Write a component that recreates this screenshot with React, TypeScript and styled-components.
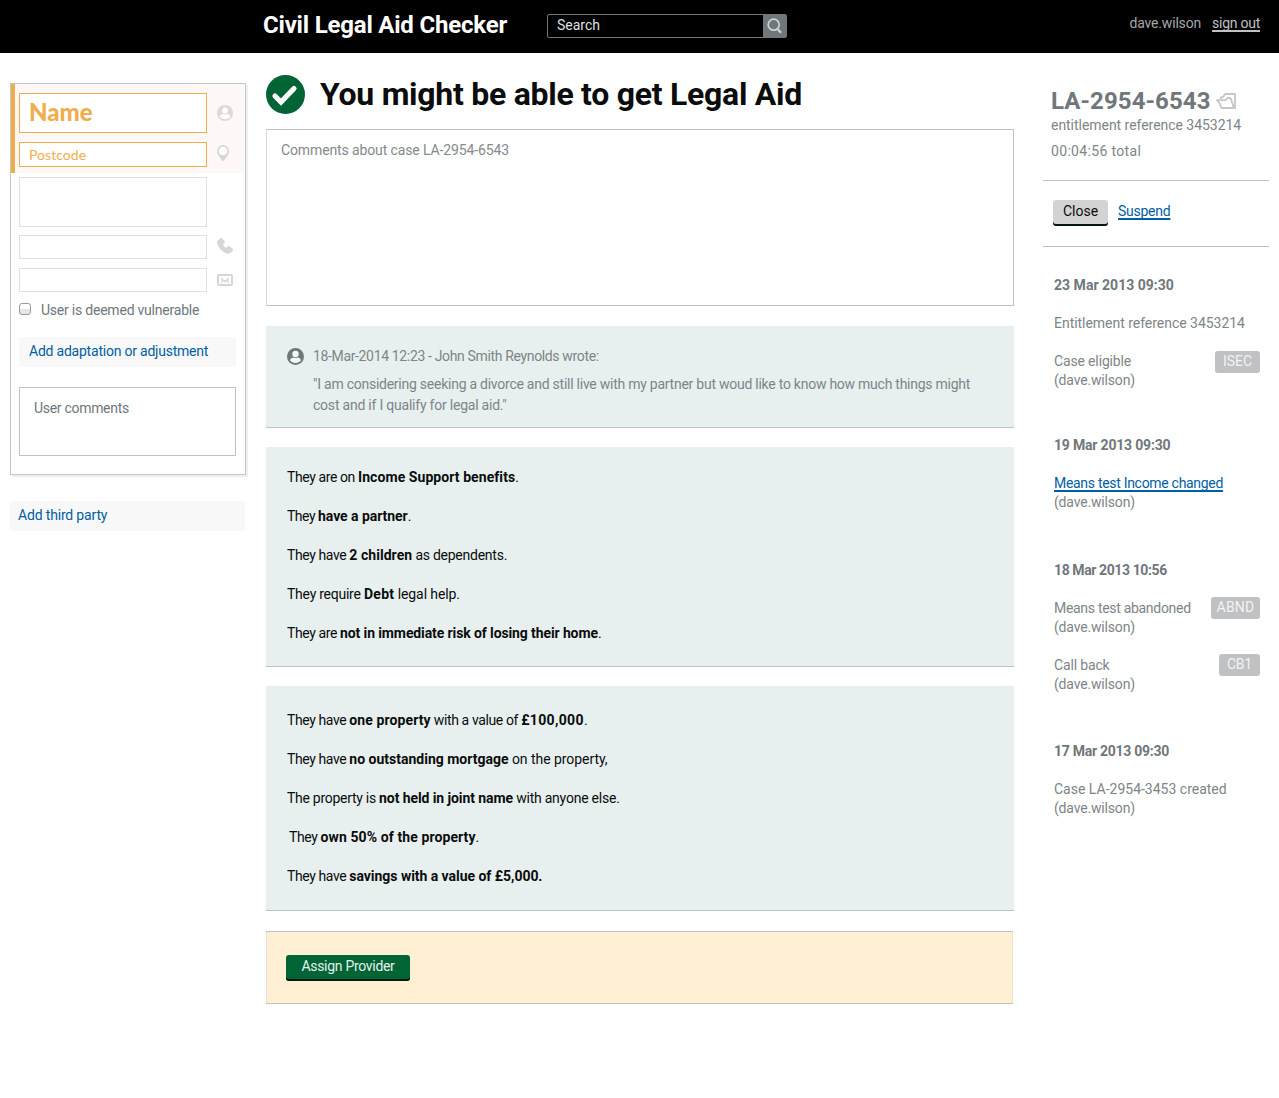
import React from "react";
import styled, { createGlobalStyle } from "styled-components";

const Global = createGlobalStyle`
  *, *::before, *::after { box-sizing: border-box; }
  body {
    margin: 0;
    background: #fff;
    color: #0b0c0c;
    font: 14px/19px Roboto, "Liberation Sans", sans-serif;
  }
  h1, h2, h3, p { margin: 0; font-size: inherit; font-weight: 400; }
  svg { display: block; flex: none; }
`;

const T = styled.span<{ $ls?: number }>`
  letter-spacing: ${(p) => p.$ls ?? 0}px;
  white-space: pre;
`;
const B = styled(T)`
  font-weight: 700;
`;

const Page = styled.div`
  min-height: 1098px;
`;
const Header = styled.header`
  height: 53px;
  background: #000;
  display: flex;
  align-items: flex-start;
  padding: 0 19px 0 263px;
`;
const Brand = styled.h1`
  width: 284px;
  padding-top: 11px;
  color: #fff;
  font-size: 24px;
  line-height: 28px;
`;
const Search = styled.div`
  display: flex;
  width: 240px;
  height: 24px;
  margin-top: 14px;
  border: 1px solid #6f777b;
  border-radius: 2px;
  color: #dee0e2;
  line-height: 21px;
  padding-left: 9px;
  justify-content: space-between;
`;
const SearchButton = styled.span`
  width: 23px;
  background: #6f777b;
  display: grid;
  place-items: center;
`;
const Account = styled.div`
  display: flex;
  gap: 11px;
  margin: 14px 0 0 auto;
  color: #a4a8aa;
`;
const Link = styled.a<{ $c?: string }>`
  color: ${(p) => p.$c ?? "#005ea5"};
  text-decoration: underline;
  text-decoration-thickness: 1.5px;
  text-underline-offset: 2px;
  text-decoration-skip-ink: none;
  white-space: nowrap;
`;
const Columns = styled.div`
  display: grid;
  grid-template-columns: 257px 777px 226px;
  padding-left: 9px;
  align-items: start;
`;
const Left = styled.aside`
  padding-top: 30px;
`;
const Card = styled.section`
  width: 236px;
  height: 392px;
  margin-left: 1px;
  border: 1px solid #bfc9c8;
  box-shadow: 2px 2px 0 #efefef;
`;
const Required = styled.div`
  height: 89px;
  width: 233px;
  padding: 9px 0 0 4px;
  background: #fdf7f5;
  border-left: 4px solid #f0ad4e;
`;
const Optional = styled.div`
  padding: 4px 0 0 8px;
`;
const FieldRow = styled.div<{ $gap: number; $lift?: number }>`
  display: flex;
  align-items: center;
  gap: 10px;
  margin-bottom: ${(p) => p.$gap}px;
  svg { margin-bottom: ${(p) => p.$lift ?? 0}px; }
`;
const Field = styled.div<{ $h: number; $active?: boolean; $size?: number }>`
  width: 188px;
  height: ${(p) => p.$h}px;
  padding-left: 9px;
  background: #fff;
  border: 1px solid ${(p) => (p.$active ? "#f0ad4e" : "#dfe1e1")};
  color: #f0ad4e;
  font-family: Lato, sans-serif;
  font-size: ${(p) => p.$size ?? 14}px;
  font-weight: ${(p) => ((p.$size ?? 14) > 20 ? 900 : 400)};
  line-height: ${(p) => ((p.$size ?? 14) > 20 ? p.$h - 5 : p.$h - 1)}px;
`;
const CheckRow = styled.div`
  display: flex;
  gap: 10px;
  height: 45px;
  color: #6f777b;
  padding-top: 9px;
`;
const Check = styled.span`
  width: 12px;
  height: 12px;
  margin-top: 2px;
  border: 1px solid #9a9a9a;
  border-radius: 3px;
  background: linear-gradient(#fff 45%, #e6e6e6 50%);
`;
const Action = styled.div<{ $w: number; $x: number }>`
  width: ${(p) => p.$w}px;
  height: 30px;
  padding-left: ${(p) => p.$x}px;
  border-radius: 3px;
  background: #f8f8f8;
  color: #005ea5;
  line-height: 29px;
`;
const UserComments = styled.div`
  width: 217px;
  height: 69px;
  margin-top: 20px;
  border: 1px solid #bfc1c3;
  padding: 11px 14px;
  color: #6f777b;
`;
const ThirdParty = styled.div`
  padding-top: 26px;
`;
const Main = styled.main`
  width: 748px;
  padding-top: 22px;
`;
const Outcome = styled.div`
  display: flex;
  gap: 15px;
  height: 39px;
  margin-bottom: 15px;
  font-size: 32px;
  line-height: 38px;
`;
const CaseNotes = styled.div`
  height: 177px;
  border: 1px solid #bfc1c3;
  border-left: 1px solid #d7d9da;
  padding: 11px 14px;
  color: #838a8d;
`;
const Panel = styled.section<{ $h: number; $top: number; $gap: number }>`
  display: flex;
  flex-direction: column;
  gap: 19px;
  height: ${(p) => p.$h}px;
  margin-top: ${(p) => p.$gap}px;
  padding: ${(p) => p.$top}px 21px 0;
  background: #e7f0ef;
  border-bottom: 1px solid #b9c6c6;
  line-height: 20px;
`;
const Statement = styled.p<{ $indent?: number }>`
  padding-left: ${(p) => p.$indent ?? 0}px;
`;
const Quote = styled.div`
  display: grid;
  grid-template-columns: 18px 1fr;
  column-gap: 8px;
  align-items: center;
  color: #7d8588;
`;
const QuoteText = styled.p`
  grid-column: 2;
  margin-top: 8px;
  line-height: 21px;
`;
const Assign = styled.section`
  width: 747px;
  height: 73px;
  margin-top: 20px;
  padding: 23px 20px;
  background: #fff0d4;
  border: solid #bfc1c3;
  border-width: 1px 0;
  box-shadow: inset 1px 0 #e6dfd1, inset -1px 0 #eee2ca;
`;
const Button = styled.button<{ $w: number; $green?: boolean }>`
  display: block;
  width: ${(p) => p.$w}px;
  height: 26px;
  padding: 0 0 4px;
  border: 0;
  border-radius: 3px;
  font: inherit;
  line-height: 22px;
  color: ${(p) => (p.$green ? "#e5f0eb" : "#0b0c0c")};
  background: ${(p) => (p.$green ? "#006435" : "#d3d3d3")};
  box-shadow: inset 0 -2px #00190d;
`;
const Right = styled.aside`
  padding-top: 34px;
  color: #7d8588;
`;
const Reference = styled.div`
  height: 93px;
  padding-left: 8px;
`;
const CaseTitle = styled.div`
  display: flex;
  align-items: center;
  gap: 5px;
  height: 28px;
  font-size: 24px;
  line-height: 28px;
  color: #6f777b;
  svg { margin-bottom: 1px; }
`;
const Line = styled.p<{ $top?: number }>`
  padding-top: ${(p) => p.$top ?? 0}px;
`;
const Controls = styled.div`
  display: flex;
  gap: 10px;
  height: 67px;
  border: solid #bfc1c3;
  border-width: 1px 0;
  padding: 19px 0 0 10px;
  line-height: 23px;
`;
const Group = styled.section<{ $top: number }>`
  display: flex;
  flex-direction: column;
  gap: 19px;
  padding: ${(p) => p.$top}px 9px 0 11px;
`;
const Entry = styled.div`
  display: flex;
  justify-content: space-between;
`;
const Lines = styled.div`
  display: flex;
  flex-direction: column;
`;
const When = styled.h3`
  color: #6f777b;
`;
const Badge = styled.span<{ $w: number; $top?: number }>`
  width: ${(p) => p.$w}px;
  height: 22px;
  margin: ${(p) => p.$top ?? -2}px 0 -3px;
  border-radius: 3px;
  background: #bfc1c3;
  color: #f2f2f3;
  text-align: center;
  line-height: 21px;
`;

const Person = ({ size = 16, color = "#dadada", face = "#fff" }) => (
  <svg width={size} height={size} viewBox="0 0 16 16">
    <circle cx="8" cy="8" r="8" fill={color} />
    <circle cx="8" cy="5.600" r="3" fill={face} />
    <path d="M2.900 11.800c0-2 2-2.900 3.400-2.900 1 .7 2.400.7 3.400 0 1.400 0 3.400.9 3.400 2.900-1.200 1.400-3.100 2.400-5.100 2.400s-3.900-1-5.100-2.400z" fill={face} />
  </svg>
);
const Pin = () => (
  <svg width="12" height="16" viewBox="0 0 12 16">
    <path d="M6 0a6 6 0 0 1 6 6c0 3.800-3.500 7-5 9.300q-1 1.200-2 0C3.500 13 0 9.800 0 6a6 6 0 0 1 6-6z" fill="#d6d6d6" />
    <circle cx="6" cy="6" r="4.300" fill="#fff" />
  </svg>
);
const Phone = () => (
  <svg width="16" height="16" viewBox="0 0 16 16" fill="#d6d6d6">
    <path d="M.4 3 2.800.7q1.300-1.200 2.600.1L7.500 3q1 1.100 0 2.200L6 6.800c.6 1.300 1.700 2.400 3 3.200l1.300-1.300q1.200-1.100 2.500-.1l2.600 2q1.200 1.100.1 2.300l-1.900 1.900c-1.500 1.500-4.700 1.200-7.600-1.200C3.300 11.500.9 8.300.2 5.400Q-.200 3.800.4 3z" />
  </svg>
);
const Mail = () => (
  <svg width="16" height="12" viewBox="0 0 16 12" fill="none" stroke="#d6d6d6">
    <rect x="1" y="1" width="14" height="10" rx="1" strokeWidth="2" />
    <path d="M4 4l4 3.500L12 4M4 8.500l2-2M12 8.500l-2-2" strokeWidth="1.400" />
  </svg>
);
const Folder = () => (
  <svg width="20" height="16" viewBox="0 0 20 16" fill="none" stroke="#c4c6c8" strokeWidth="1.800" strokeLinejoin="round">
    <path d="M5 6V4.200l2-.2L9.200 1H19v14H5.500" />
    <path d="M5.500 15C4.500 11.500 3 9 1 7.200h8.500l2-2.200h2.800c1.700 2.500 1.700 6 3.700 9.500" />
  </svg>
);
const Magnifier = () => (
  <svg width="15" height="16" viewBox="0 0 15 16" fill="none" stroke="#d0d3d5" strokeWidth="1.700">
    <circle cx="6.700" cy="6.700" r="5.500" />
    <path d="M10.500 11l3.500 3.800" strokeWidth="2.200" />
  </svg>
);
const Tick = () => (
  <svg width="39" height="39" viewBox="0 0 39 39">
    <circle cx="19.500" cy="19.500" r="19.500" fill="#006435" />
    <path d="M9 21l6 6L28 13.500" fill="none" stroke="#fff" strokeWidth="5.200" strokeLinecap="round" />
  </svg>
);

export default function App() {
  return (
    <Page>
      <Global />
      <Header>
        <Brand><B $ls={-0.2}>Civil Legal Aid Checker</B></Brand>
        <Search>
          <T>Search</T>
          <SearchButton><Magnifier /></SearchButton>
        </Search>
        <Account>
          <T $ls={-0.18}>dave.wilson</T>
          <Link $c="#bfc1c3"><T $ls={-0.25}>sign out</T></Link>
        </Account>
      </Header>
      <Columns>
        <Left>
          <Card>
            <Required>
              <FieldRow $gap={9}>
                <Field $h={40} $active $size={24}><T>Name</T></Field>
                <Person />
              </FieldRow>
              <FieldRow $gap={0} $lift={4}>
                <Field $h={25} $active><T $ls={0.05}>Postcode</T></Field>
                <Pin />
              </FieldRow>
            </Required>
            <Optional>
              <FieldRow $gap={8}><Field $h={50} /></FieldRow>
              <FieldRow $gap={9} $lift={2}><Field $h={24} /><Phone /></FieldRow>
              <FieldRow $gap={0}><Field $h={24} /><Mail /></FieldRow>
              <CheckRow>
                <Check />
                <T $ls={-0.22}>User is deemed vulnerable</T>
              </CheckRow>
              <Action $w={217} $x={10}><T $ls={-0.22}>Add adaptation or adjustment</T></Action>
              <UserComments><T $ls={-0.3}>User comments</T></UserComments>
            </Optional>
          </Card>
          <ThirdParty>
            <Action $w={236} $x={9}><T $ls={-0.17}>Add third party</T></Action>
          </ThirdParty>
        </Left>
        <Main>
          <Outcome>
            <Tick />
            <B $ls={-0.27}>You might be able to get Legal Aid</B>
          </Outcome>
          <CaseNotes><T $ls={-0.12}>Comments about case LA-2954-6543</T></CaseNotes>
          <Panel $h={102} $top={20} $gap={20}>
            <Quote>
              <Person size={17} color="#6f777b" face="#f4f8f7" />
              <T $ls={-0.35}>18-Mar-2014 12:23 - John Smith Reynolds wrote:</T>
              <QuoteText>
                <T $ls={-0.25}>"I am considering seeking a divorce and still live with my partner but woud like to know how much things might</T>
                <br />
                <T $ls={-0.22}>cost and if I qualify for legal aid."</T>
              </QuoteText>
            </Quote>
          </Panel>
          <Panel $h={220} $top={20} $gap={19}>
            <Statement><T $ls={-0.4}>They are on </T><B $ls={0.07}>Income Support benefits</B>.</Statement>
            <Statement><T $ls={-0.5}>They </T><B $ls={-0.05}>have a partner</B>.</Statement>
            <Statement><T $ls={-0.4}>They have </T><B $ls={0.05}>2 children</B><T $ls={-0.25}> as dependents.</T></Statement>
            <Statement><T $ls={-0.25}>They require </T><B $ls={0.3}>Debt</B><T $ls={-0.1}> legal help.</T></Statement>
            <Statement><T $ls={-0.4}>They are </T><B $ls={-0.11}>not in immediate risk of losing their home</B>.</Statement>
          </Panel>
          <Panel $h={225} $top={24} $gap={19}>
            <Statement><T $ls={-0.4}>They have </T><B $ls={0.1}>one property</B><T $ls={-0.38}> with a value of </T><B $ls={0.35}>£100,000</B>.</Statement>
            <Statement><T $ls={-0.4}>They have </T><B>no outstanding mortgage</B><T $ls={-0.05}> on the property,</T></Statement>
            <Statement><T $ls={-0.28}>The property is </T><B $ls={-0.09}>not held in joint name</B><T $ls={-0.23}> with anyone else.</T></Statement>
            <Statement $indent={2}><T $ls={-0.4}>They </T><B $ls={0.1}>own 50% of the property</B>.</Statement>
            <Statement><T $ls={-0.4}>They have </T><B $ls={-0.04}>savings with a value of £5,000.</B></Statement>
          </Panel>
          <Assign>
            <Button $w={124} $green><T $ls={-0.3}>Assign Provider</T></Button>
          </Assign>
        </Main>
        <Right>
          <Reference>
            <CaseTitle><B $ls={0.1}>LA-2954-6543</B><Folder /></CaseTitle>
            <Line $top={1}><T $ls={-0.04}>entitlement reference 3453214</T></Line>
            <Line $top={7}><T $ls={0.33}>00:04:56 total</T></Line>
          </Reference>
          <Controls>
            <Button $w={55}><T>Close</T></Button>
            <Link><T $ls={-0.25}>Suspend</T></Link>
          </Controls>
          <Group $top={29}>
            <When><B $ls={0.02}>23 Mar 2013 09:30</B></When>
            <T $ls={-0.03}>Entitlement reference 3453214</T>
            <Entry>
              <Lines><T $ls={-0.15}>Case eligible</T><T $ls={-0.17}>(dave.wilson)</T></Lines>
              <Badge $w={45} $top={-1}><T>ISEC</T></Badge>
            </Entry>
          </Group>
          <Group $top={46}>
            <When><B $ls={-0.19}>19 Mar 2013 09:30</B></When>
            <Lines><Link><T $ls={-0.3}>Means test Income changed</T></Link><T $ls={-0.17}>(dave.wilson)</T></Lines>
          </Group>
          <Group $top={49}>
            <When><B $ls={-0.4}>18 Mar 2013 10:56</B></When>
            <Entry>
              <Lines><T $ls={-0.3}>Means test abandoned</T><T $ls={-0.17}>(dave.wilson)</T></Lines>
              <Badge $w={49}><T $ls={0.2}>ABND</T></Badge>
            </Entry>
            <Entry>
              <Lines><T $ls={-0.15}>Call back</T><T $ls={-0.17}>(dave.wilson)</T></Lines>
              <Badge $w={41}><T $ls={-0.2}>CB1</T></Badge>
            </Entry>
          </Group>
          <Group $top={48}>
            <When><B $ls={-0.27}>17 Mar 2013 09:30</B></When>
            <Lines><T>Case LA-2954-3453 created</T><T $ls={-0.17}>(dave.wilson)</T></Lines>
          </Group>
        </Right>
      </Columns>
    </Page>
  );
}
